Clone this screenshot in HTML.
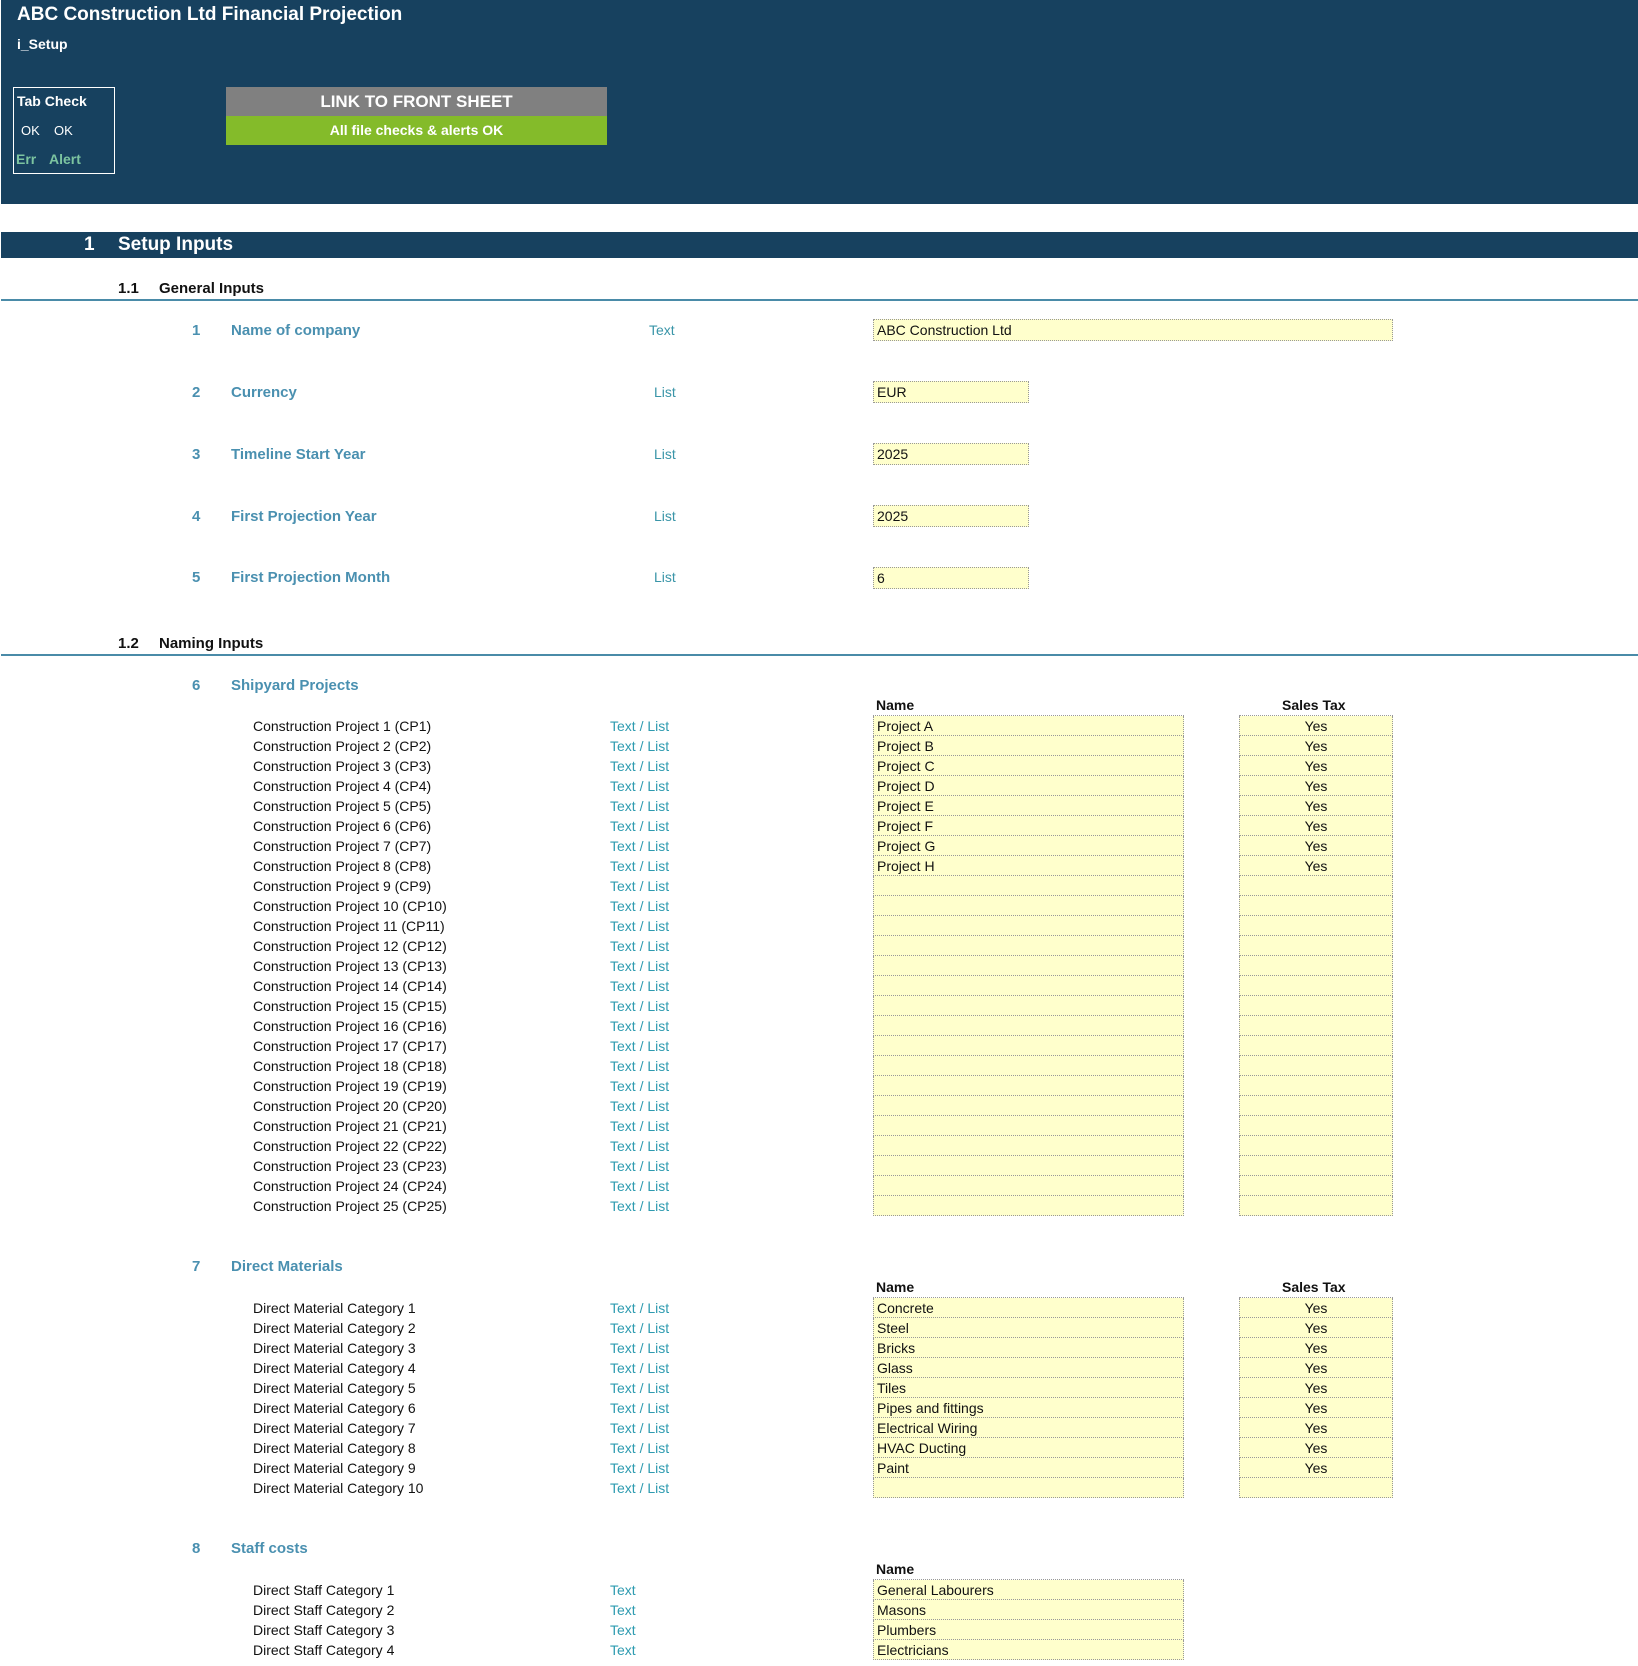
<!DOCTYPE html>
<html><head><meta charset="utf-8"><style>
*{margin:0;padding:0;box-sizing:border-box}
body{width:1638px;height:1666px;background:#fff;font-family:"Liberation Sans",Arial,sans-serif;font-size:14px;color:#111;position:relative;overflow:hidden}
.a{position:absolute;white-space:nowrap}
.hdr{left:1px;top:0;width:1637px;height:204px;background:#17415f}
.bar{left:1px;top:232px;width:1637px;height:26px;background:#17415f}
.line{left:1px;width:1637px;height:2px;background:#4a8ba8}
.num{color:#4a90b0;font-weight:bold;font-size:15px}
.lab{color:#4a90b0;font-weight:bold;font-size:15px}
.typ{color:#3a95a8;font-size:14px}
.box{background:#ffffcc;border:1px dotted #999;padding-left:3px;line-height:20px;height:22px}
.r{position:absolute;left:0;width:1638px;height:20px;line-height:20px}
.r span{position:absolute;white-space:nowrap}
.r .l{left:253px}
.r .t{left:610px;color:#2e9bb0}
.r .n{left:873px;width:311px;height:20px;background:#ffffcc;border-left:1px dotted #999;border-right:1px dotted #999;border-bottom:1px dotted #999;padding-left:3px}
.r .s{left:1239px;width:154px;height:20px;background:#ffffcc;border-left:1px dotted #999;border-right:1px dotted #999;border-bottom:1px dotted #999;text-align:center}
.hd{font-weight:bold}
</style></head><body>
<div class="a hdr"></div>
<div class="a" style="left:17px;top:4px;color:#fff;font-weight:bold;font-size:19px">ABC Construction Ltd Financial Projection</div>
<div class="a" style="left:17px;top:36px;color:#fff;font-weight:bold;font-size:14px">i_Setup</div>
<div class="a" style="left:13px;top:87px;width:102px;height:87px;border:1px solid #fff"></div>
<div class="a" style="left:17px;top:93px;color:#fff;font-weight:bold;font-size:14px">Tab Check</div>
<div class="a" style="left:21px;top:123px;color:#fff;font-size:13px">OK</div>
<div class="a" style="left:54px;top:123px;color:#fff;font-size:13px">OK</div>
<div class="a" style="left:16px;top:151px;color:#7cc4a0;font-weight:bold;font-size:14px">Err</div>
<div class="a" style="left:49px;top:151px;color:#7cc4a0;font-weight:bold;font-size:14px">Alert</div>
<div class="a" style="left:226px;top:87px;width:381px;height:29px;background:#808080;color:#fff;font-weight:bold;font-size:17px;text-align:center;line-height:29px">LINK TO FRONT SHEET</div>
<div class="a" style="left:226px;top:116px;width:381px;height:29px;background:#84bb2a;color:#fff;font-weight:bold;font-size:14px;text-align:center;line-height:29px">All file checks &amp; alerts OK</div>

<div class="a bar"></div>
<div class="a" style="left:84px;top:233px;color:#fff;font-weight:bold;font-size:19px;line-height:24px">1</div>
<div class="a" style="left:118px;top:233px;color:#fff;font-weight:bold;font-size:19px;line-height:24px">Setup Inputs</div>

<div class="a" style="left:118px;top:280px;font-weight:bold;font-size:15px">1.1</div>
<div class="a" style="left:159px;top:280px;font-weight:bold;font-size:15px">General Inputs</div>
<div class="a line" style="top:299px"></div>

<div class="a num" style="left:192px;top:322px">1</div><div class="a lab" style="left:231px;top:322px">Name of company</div><div class="a typ" style="left:649px;top:322px">Text</div>
<div class="a box" style="left:873px;top:319px;width:520px">ABC Construction Ltd</div>
<div class="a num" style="left:192px;top:384px">2</div><div class="a lab" style="left:231px;top:384px">Currency</div><div class="a typ" style="left:654px;top:384px">List</div>
<div class="a box" style="left:873px;top:381px;width:156px">EUR</div>
<div class="a num" style="left:192px;top:446px">3</div><div class="a lab" style="left:231px;top:446px">Timeline Start Year</div><div class="a typ" style="left:654px;top:446px">List</div>
<div class="a box" style="left:873px;top:443px;width:156px">2025</div>
<div class="a num" style="left:192px;top:508px">4</div><div class="a lab" style="left:231px;top:508px">First Projection Year</div><div class="a typ" style="left:654px;top:508px">List</div>
<div class="a box" style="left:873px;top:505px;width:156px">2025</div>
<div class="a num" style="left:192px;top:569px">5</div><div class="a lab" style="left:231px;top:569px">First Projection Month</div><div class="a typ" style="left:654px;top:569px">List</div>
<div class="a box" style="left:873px;top:567px;width:156px">6</div>

<div class="a" style="left:118px;top:635px;font-weight:bold;font-size:15px">1.2</div>
<div class="a" style="left:159px;top:635px;font-weight:bold;font-size:15px">Naming Inputs</div>
<div class="a line" style="top:654px"></div>

<div class="a num" style="left:192px;top:677px">6</div><div class="a lab" style="left:231px;top:677px">Shipyard Projects</div>
<div class="a hd" style="left:876px;top:697px">Name</div><div class="a hd" style="left:1282px;top:697px">Sales Tax</div>
<div class="a" style="left:873px;top:715px;width:311px;border-top:1px dotted #999"></div>
<div class="a" style="left:1239px;top:715px;width:154px;border-top:1px dotted #999"></div>
<div style="position:absolute;left:0;top:716px">
<div class="r" style="top:0"><span class="l">Construction Project 1 (CP1)</span><span class="t">Text / List</span><span class="n">Project A</span><span class="s">Yes</span></div>
<div class="r" style="top:20px"><span class="l">Construction Project 2 (CP2)</span><span class="t">Text / List</span><span class="n">Project B</span><span class="s">Yes</span></div>
<div class="r" style="top:40px"><span class="l">Construction Project 3 (CP3)</span><span class="t">Text / List</span><span class="n">Project C</span><span class="s">Yes</span></div>
<div class="r" style="top:60px"><span class="l">Construction Project 4 (CP4)</span><span class="t">Text / List</span><span class="n">Project D</span><span class="s">Yes</span></div>
<div class="r" style="top:80px"><span class="l">Construction Project 5 (CP5)</span><span class="t">Text / List</span><span class="n">Project E</span><span class="s">Yes</span></div>
<div class="r" style="top:100px"><span class="l">Construction Project 6 (CP6)</span><span class="t">Text / List</span><span class="n">Project F</span><span class="s">Yes</span></div>
<div class="r" style="top:120px"><span class="l">Construction Project 7 (CP7)</span><span class="t">Text / List</span><span class="n">Project G</span><span class="s">Yes</span></div>
<div class="r" style="top:140px"><span class="l">Construction Project 8 (CP8)</span><span class="t">Text / List</span><span class="n">Project H</span><span class="s">Yes</span></div>
<div class="r" style="top:160px"><span class="l">Construction Project 9 (CP9)</span><span class="t">Text / List</span><span class="n"></span><span class="s"></span></div>
<div class="r" style="top:180px"><span class="l">Construction Project 10 (CP10)</span><span class="t">Text / List</span><span class="n"></span><span class="s"></span></div>
<div class="r" style="top:200px"><span class="l">Construction Project 11 (CP11)</span><span class="t">Text / List</span><span class="n"></span><span class="s"></span></div>
<div class="r" style="top:220px"><span class="l">Construction Project 12 (CP12)</span><span class="t">Text / List</span><span class="n"></span><span class="s"></span></div>
<div class="r" style="top:240px"><span class="l">Construction Project 13 (CP13)</span><span class="t">Text / List</span><span class="n"></span><span class="s"></span></div>
<div class="r" style="top:260px"><span class="l">Construction Project 14 (CP14)</span><span class="t">Text / List</span><span class="n"></span><span class="s"></span></div>
<div class="r" style="top:280px"><span class="l">Construction Project 15 (CP15)</span><span class="t">Text / List</span><span class="n"></span><span class="s"></span></div>
<div class="r" style="top:300px"><span class="l">Construction Project 16 (CP16)</span><span class="t">Text / List</span><span class="n"></span><span class="s"></span></div>
<div class="r" style="top:320px"><span class="l">Construction Project 17 (CP17)</span><span class="t">Text / List</span><span class="n"></span><span class="s"></span></div>
<div class="r" style="top:340px"><span class="l">Construction Project 18 (CP18)</span><span class="t">Text / List</span><span class="n"></span><span class="s"></span></div>
<div class="r" style="top:360px"><span class="l">Construction Project 19 (CP19)</span><span class="t">Text / List</span><span class="n"></span><span class="s"></span></div>
<div class="r" style="top:380px"><span class="l">Construction Project 20 (CP20)</span><span class="t">Text / List</span><span class="n"></span><span class="s"></span></div>
<div class="r" style="top:400px"><span class="l">Construction Project 21 (CP21)</span><span class="t">Text / List</span><span class="n"></span><span class="s"></span></div>
<div class="r" style="top:420px"><span class="l">Construction Project 22 (CP22)</span><span class="t">Text / List</span><span class="n"></span><span class="s"></span></div>
<div class="r" style="top:440px"><span class="l">Construction Project 23 (CP23)</span><span class="t">Text / List</span><span class="n"></span><span class="s"></span></div>
<div class="r" style="top:460px"><span class="l">Construction Project 24 (CP24)</span><span class="t">Text / List</span><span class="n"></span><span class="s"></span></div>
<div class="r" style="top:480px"><span class="l">Construction Project 25 (CP25)</span><span class="t">Text / List</span><span class="n"></span><span class="s"></span></div>
</div>

<div class="a num" style="left:192px;top:1258px">7</div><div class="a lab" style="left:231px;top:1258px">Direct Materials</div>
<div class="a hd" style="left:876px;top:1279px">Name</div><div class="a hd" style="left:1282px;top:1279px">Sales Tax</div>
<div class="a" style="left:873px;top:1297px;width:311px;border-top:1px dotted #999"></div>
<div class="a" style="left:1239px;top:1297px;width:154px;border-top:1px dotted #999"></div>
<div style="position:absolute;left:0;top:1298px">
<div class="r" style="top:0"><span class="l">Direct Material Category 1</span><span class="t">Text / List</span><span class="n">Concrete</span><span class="s">Yes</span></div>
<div class="r" style="top:20px"><span class="l">Direct Material Category 2</span><span class="t">Text / List</span><span class="n">Steel</span><span class="s">Yes</span></div>
<div class="r" style="top:40px"><span class="l">Direct Material Category 3</span><span class="t">Text / List</span><span class="n">Bricks</span><span class="s">Yes</span></div>
<div class="r" style="top:60px"><span class="l">Direct Material Category 4</span><span class="t">Text / List</span><span class="n">Glass</span><span class="s">Yes</span></div>
<div class="r" style="top:80px"><span class="l">Direct Material Category 5</span><span class="t">Text / List</span><span class="n">Tiles</span><span class="s">Yes</span></div>
<div class="r" style="top:100px"><span class="l">Direct Material Category 6</span><span class="t">Text / List</span><span class="n">Pipes and fittings</span><span class="s">Yes</span></div>
<div class="r" style="top:120px"><span class="l">Direct Material Category 7</span><span class="t">Text / List</span><span class="n">Electrical Wiring</span><span class="s">Yes</span></div>
<div class="r" style="top:140px"><span class="l">Direct Material Category 8</span><span class="t">Text / List</span><span class="n">HVAC Ducting</span><span class="s">Yes</span></div>
<div class="r" style="top:160px"><span class="l">Direct Material Category 9</span><span class="t">Text / List</span><span class="n">Paint</span><span class="s">Yes</span></div>
<div class="r" style="top:180px"><span class="l">Direct Material Category 10</span><span class="t">Text / List</span><span class="n"></span><span class="s"></span></div>
</div>

<div class="a num" style="left:192px;top:1540px">8</div><div class="a lab" style="left:231px;top:1540px">Staff costs</div>
<div class="a hd" style="left:876px;top:1561px">Name</div>
<div class="a" style="left:873px;top:1579px;width:311px;border-top:1px dotted #999"></div>
<div style="position:absolute;left:0;top:1580px">
<div class="r" style="top:0"><span class="l">Direct Staff Category 1</span><span class="t">Text</span><span class="n">General Labourers</span></div>
<div class="r" style="top:20px"><span class="l">Direct Staff Category 2</span><span class="t">Text</span><span class="n">Masons</span></div>
<div class="r" style="top:40px"><span class="l">Direct Staff Category 3</span><span class="t">Text</span><span class="n">Plumbers</span></div>
<div class="r" style="top:60px"><span class="l">Direct Staff Category 4</span><span class="t">Text</span><span class="n">Electricians</span></div>
</div>
</body></html>
